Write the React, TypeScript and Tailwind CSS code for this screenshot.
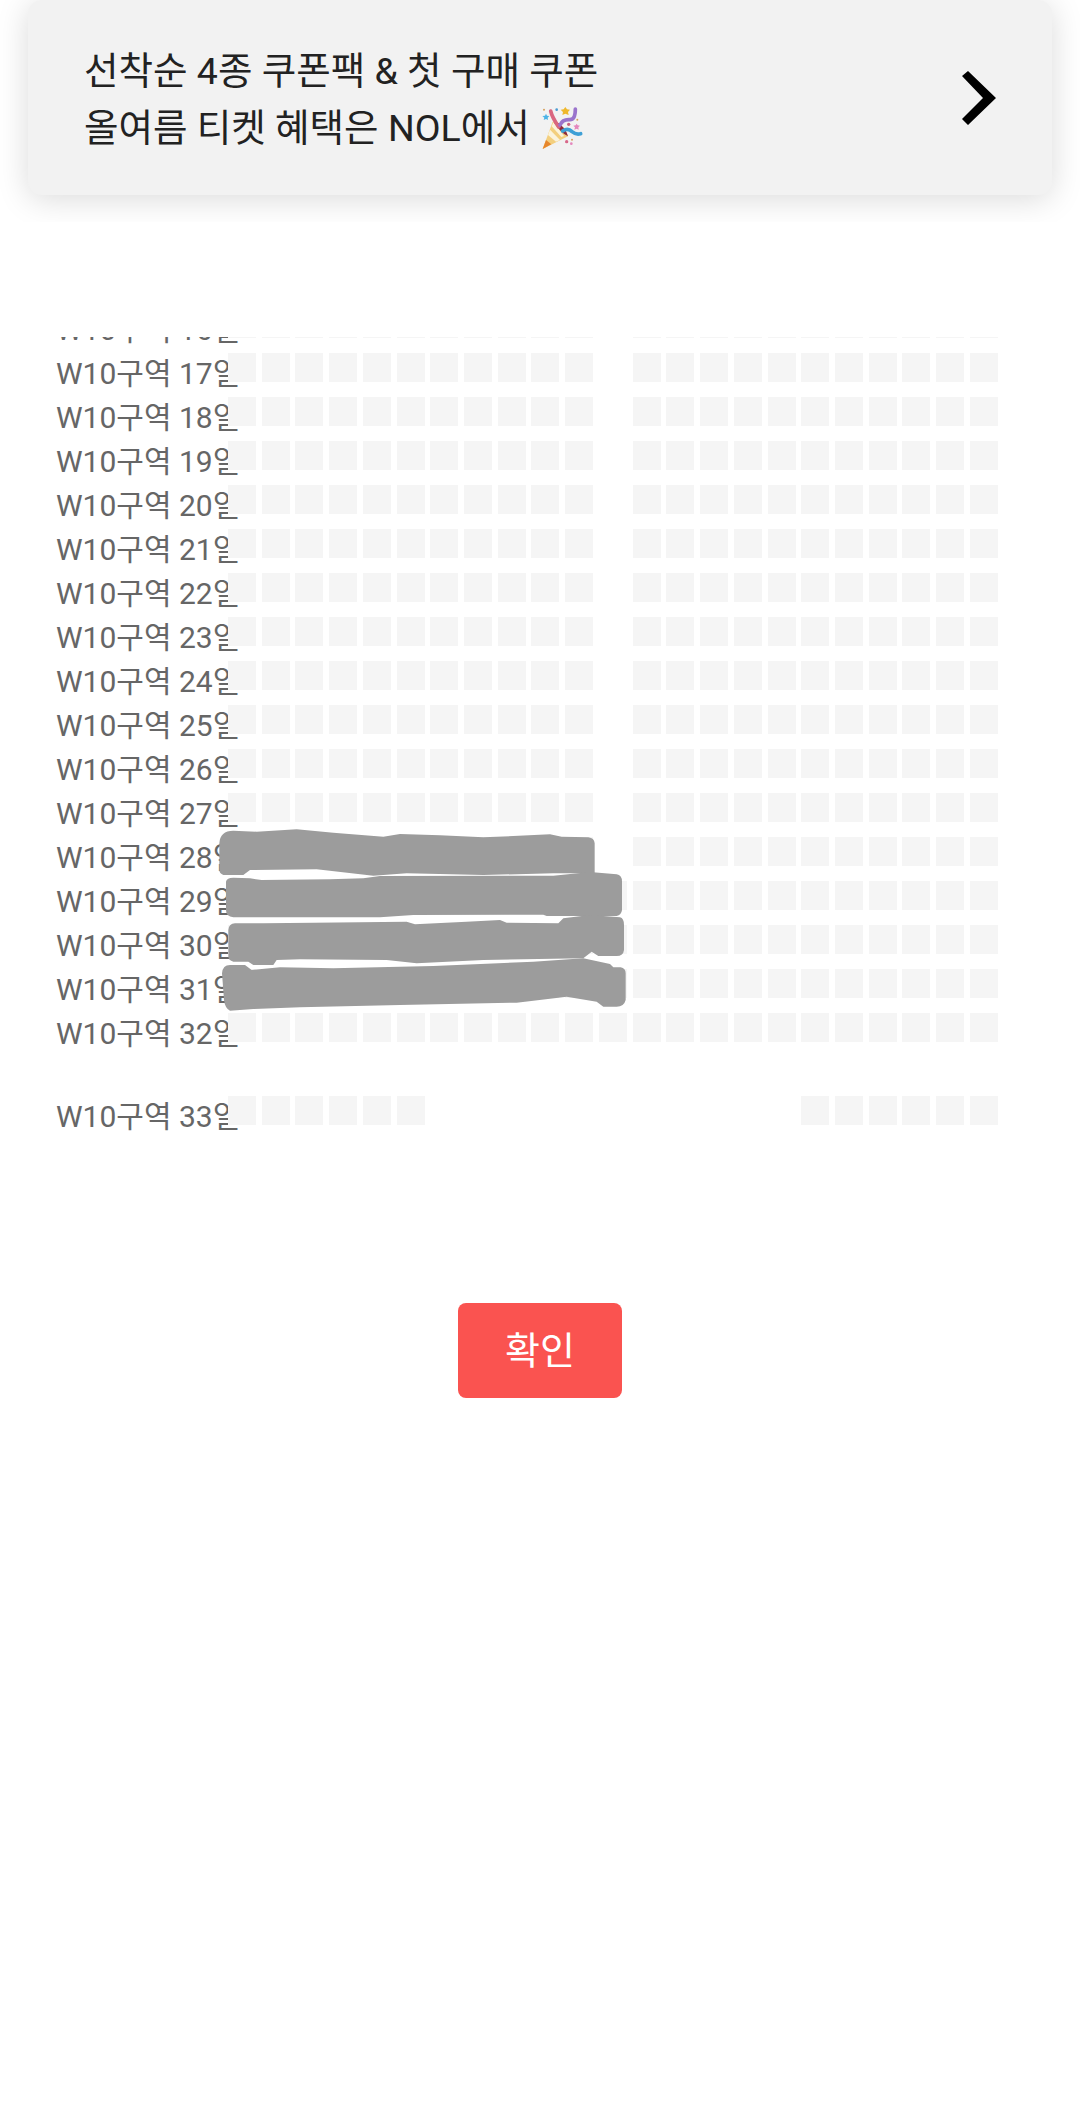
const FONT = "font-['Roboto','Noto_Sans_CJK_KR',sans-serif]";

// column indexes of the seats in a row (23 columns, 11 is the aisle)
const range = (from: number, to: number) => Array.from({ length: to - from + 1 }, (_, i) => from + i);
const BLOCKS = [...range(0, 10), ...range(12, 22)];

const rows = [
  ...range(16, 28).map((day) => ({ day, seats: BLOCKS })),
  ...range(29, 32).map((day) => ({ day, seats: range(0, 22) })),
];

function SeatRow({ day, seats }: { day: number; seats: number[] }) {
  return (
    <div className="flex h-[44px] shrink-0">
      <div className="w-[228px] shrink-0 whitespace-nowrap pl-[56px] text-[30px] leading-[42px] text-[#666666]">
        W10구역 {day}일
      </div>
      <div className="relative grid grid-cols-[repeat(23,28px)] gap-x-[5.727px] h-[29px] w-[770px]">
        {range(0, 22).map((col) => (
          <div key={col} className={seats.includes(col) ? "h-[29px] bg-[#f5f5f5]" : "h-[29px]"} />
        ))}
      </div>
    </div>
  );
}

function PartyPopper() {
  return (
    <svg viewBox="0 0 126 132" className="inline-block w-[42px] h-[44px] ml-[12px] align-[-10px]">
      <path d="M2 126 L32 44 Q52 46 60 58 Q72 68 78 88 Z" fill="#f3cf7e" />
      <path d="M2 126 L12 99 L28 112 Z" fill="#e6862c" />
      <path d="M18 84 L42 104 L54 99 L24 68 Z" fill="#fbf3dc" />
      <path d="M29 58 L58 90 L66 87 L34 46 Z" fill="#fbf3dc" />
      <path d="M36 46 Q52 46 60 58 Q72 68 78 88 Q56 78 36 46 Z" fill="#8f2a3c" />
      <path d="M50 60 Q30 30 26 12" stroke="#d9667f" strokeWidth="11" fill="none" strokeLinecap="round" />
      <path d="M54 54 Q62 36 84 38 Q100 38 100 6" stroke="#9a74cc" strokeWidth="11" fill="none" strokeLinecap="round" />
      <path d="M62 72 Q78 62 90 74 Q102 84 116 80" stroke="#3fa0d6" strokeWidth="11" fill="none" strokeLinecap="round" />
      <path d="M70 0 L75 7 L84 8 L78 15 L80 24 L70 20 L61 24 L63 15 L56 8 L65 7 Z" fill="#efb82c" />
      <path d="M12 20 L15 26 L22 27 L17 32 L18 39 L12 36 L5 39 L7 32 L1 27 L9 26 Z" fill="#4bb3e6" />
      <path d="M104 50 L107 55 L114 56 L109 61 L110 68 L104 65 L97 68 L99 61 L94 56 L101 55 Z" fill="#e487bd" />
      <circle cx="44" cy="8" r="4" fill="#4b9bd1" />
      <circle cx="6" cy="8" r="3" fill="#d6a05c" />
      <circle cx="80" cy="52" r="5" fill="#c9607c" />
      <circle cx="106" cy="38" r="3" fill="#d6a05c" />
      <circle cx="74" cy="104" r="5" fill="#d8688a" />
      <circle cx="88" cy="110" r="4" fill="#e487bd" />
      <circle cx="90" cy="98" r="3" fill="#d6a05c" />
    </svg>
  );
}

// marker scribble over the booked seats
function Scribble() {
  return (
    <svg viewBox="0 0 1380 720" className="absolute left-[200px] top-[810px] w-[460px] h-[240px]" fill="#9c9c9c">
      <path d="M58 100 Q60 62 100 62 L170 65 L290 58 L400 68 L550 80 L600 72 L720 76 L850 82 L1050 73 L1085 80 L1165 82 Q1183 84 1184 100 L1184 190 L1060 190 L850 195 L620 190 L520 197 L350 178 L150 180 L130 195 L70 195 Q58 190 58 180 Z" />
      <path d="M78 215 Q80 203 100 203 L150 205 L185 210 L390 208 L490 205 L540 198 L1060 197 L1170 186 L1250 193 Q1266 195 1266 215 L1266 300 Q1264 315 1250 318 L1040 318 L1030 314 L640 315 L540 322 L240 322 L100 322 Q78 320 78 300 Z" />
      <path d="M85 360 Q87 340 105 340 L190 340 L340 338 L620 335 L645 343 L800 335 L900 330 L920 338 L1075 340 L1090 325 L1170 315 L1260 322 Q1272 325 1272 345 L1272 420 Q1270 438 1250 438 L1195 438 L1175 425 L1150 445 L850 450 L650 460 L560 450 L300 448 L230 450 L220 465 L160 465 L145 455 L100 455 Q85 450 85 440 Z" />
      <path d="M66 490 Q68 465 90 465 L135 465 L155 480 L240 472 L400 475 L700 468 L1000 455 L1150 445 L1230 462 L1240 472 L1262 472 Q1277 475 1277 490 L1277 570 Q1272 590 1250 590 L1210 590 L1190 575 L1100 560 L950 578 L600 585 L300 592 L160 597 L90 602 Q75 595 72 570 Z" />
    </svg>
  );
}

export default function App() {
  return (
    <div className={`relative h-[2106px] w-[1080px] overflow-hidden bg-white ${FONT}`}>
      {/* coupon banner */}
      <div className="h-[222px] overflow-hidden px-[28px]">
        <div className="flex h-[195px] items-center justify-between rounded-[14px] bg-[#f2f2f2] pl-[56px] pr-[56px] shadow-[0_4px_32px_rgba(0,0,0,0.15)]">
          <div className="pt-[5px] text-[37.5px] leading-[57px] text-[#222222]">
            <div>선착순 4종 쿠폰팩 &amp; 첫 구매 쿠폰</div>
            <div>
              올여름 티켓 혜택은 NOL에서
              <PartyPopper />
            </div>
          </div>
          <svg viewBox="0 0 34 54" className="h-[54px] w-[34px]">
            <path d="M6 0 L34 27 L6 54 L0 48 L21 27 L0 5 Z" fill="#000000" />
          </svg>
        </div>
      </div>

      {/* seat list, scrolled so that row 16 is almost out of view */}
      <div className="mt-[115px] h-[800px] overflow-hidden">
        <div className="-mt-[28px] flex flex-col">
          {rows.map((row) => (
            <SeatRow key={row.day} day={row.day} seats={row.seats} />
          ))}
          <div className="mt-[39px]">
            <SeatRow day={33} seats={[...range(0, 5), ...range(17, 22)]} />
          </div>
        </div>
      </div>

      <div className="mt-[166px] flex justify-center">
        <button className="h-[95px] w-[164px] rounded-[8px] bg-[#fa5350] pt-[2px] text-[38px] text-white">확인</button>
      </div>

      <Scribble />
    </div>
  );
}
